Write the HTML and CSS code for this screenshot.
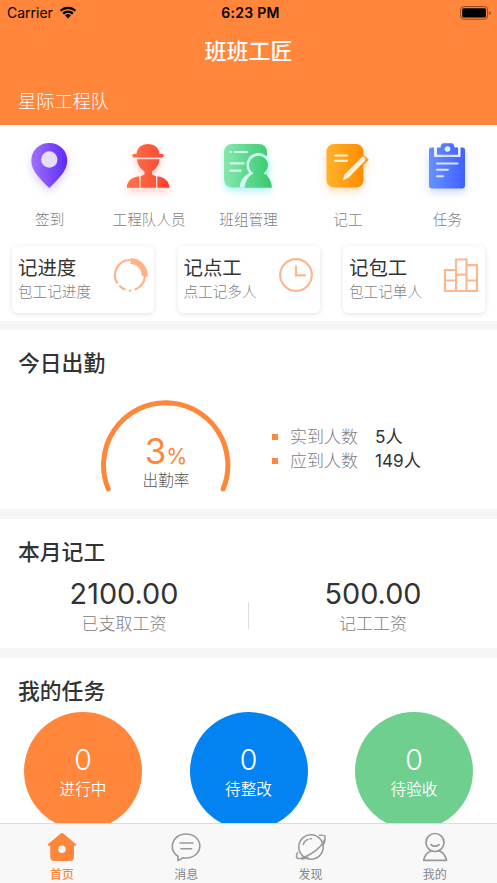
FILE: index.html
```html
<!DOCTYPE html>
<html lang="zh-CN">
<head>
<meta charset="utf-8">
<title>班班工匠</title>
<link rel="stylesheet" href="styles.css">
</head>
<body>
<div class="app">
  <header class="header">
    <div class="status">
      <div class="carrier">Carrier
        <svg width="18" height="13" viewBox="0 0 18 13"><path d="M1.6 4.8a10.6 10.6 0 0 1 14.8 0M4.2 7.6a6.8 6.8 0 0 1 9.6 0" fill="none" stroke="#000" stroke-width="2.3"/><path d="M9 12.4L6.1 9.5a4.1 4.1 0 0 1 5.8 0z"/></svg>
      </div>
      <div class="clock">6:23 PM</div>
      <div class="battery">
        <svg width="32" height="14" viewBox="0 0 32 14"><rect x=".6" y=".6" width="27" height="12.6" rx="3.2" fill="none" stroke="#8c4a20"/><rect x="2.2" y="2.3" width="23.8" height="9.2" rx="1.5"/><path d="M29.3 5v4q1.6-.5 1.6-2t-1.6-2z" fill="#8c4a20"/></svg>
      </div>
    </div>
    <h1 class="title">班班工匠</h1>
    <div class="team">星际工程队</div>
  </header>

  <section class="top">
    <nav class="shortcuts">
      <a class="shortcut">
        <svg class="glow-violet" width="60" height="66" viewBox="0 0 60 66"><defs><linearGradient id="violet"><stop offset="0" stop-color="#a071fa"/><stop offset="1" stop-color="#5c2bfa"/></linearGradient></defs><path fill="url(#violet)" d="M29.300 8c10 0 18 7.500 18 17.500C47.300 36 38.300 44 29.300 53C20.300 44 11.300 36 11.300 25.500C11.300 15.500 19.300 8 29.300 8z"/><circle cx="29.300" cy="24.500" r="8.200" fill="#e5ddfc"/></svg>
        <span>签到</span>
      </a>
      <a class="shortcut">
        <svg class="glow-red" width="60" height="66" viewBox="0 0 60 66"><defs><linearGradient id="red" gradientUnits="userSpaceOnUse" x1="9" y1="0" x2="51" y2="0"><stop offset="0" stop-color="#ff7648"/><stop offset="1" stop-color="#fd4132"/></linearGradient></defs><g fill="url(#red)" transform="translate(-1 0)"><path d="M16.500 19h2C19 12.500 24 9 30 9s11 3.500 11.500 10h2.500a1.700 1.700 0 0 1 0 3.500h-28a1.700 1.700 0 0 1 0-3.500z"/><path d="M19 24.200h22.500q-.5 8-7.500 12.300v3l4 1.800v11.500H22.600V41.300l3.900-1.800v-3Q19.500 32 19 24.200z"/><path d="M21.300 41.200v11.600H8.800c0-6.500 5-11 12.500-11.600zM39.300 41.200c7 .8 12.200 5.300 12.200 11.600H39.300z"/></g></svg>
        <span>工程队人员</span>
      </a>
      <a class="shortcut">
        <svg class="glow-cyan" width="60" height="66" viewBox="0 0 60 66"><defs><linearGradient id="green" gradientUnits="userSpaceOnUse" x1="6" y1="0" x2="54" y2="0"><stop offset="0" stop-color="#84e8ad"/><stop offset="1" stop-color="#37c96f"/></linearGradient><clipPath id="sheet"><rect x="6" y="9" width="43" height="43.500" rx="8"/></clipPath></defs><rect x="6" y="9" width="43" height="43.500" rx="8" fill="url(#green)"/><path d="M12.500 17h.5m4 0h12M12.500 28.300h13M12.500 35.700h10" stroke="#d5fff0" stroke-width="2.200" stroke-linecap="round"/><g fill="#d3faf3"><circle cx="40.500" cy="30" r="12"/><path d="M21.500 52.500q1-10 11-15.500H48l1 15.500z"/></g><g fill="url(#green)"><circle cx="40.500" cy="30.300" r="9.500"/><path d="M26.500 52.800q1-10.300 8.700-14.300 1.300-.8.600-2.500h9.400q-.7 1.700.6 2.500 7.400 4 8.200 14.300z"/></g></svg>
        <span>班组管理</span>
      </a>
      <a class="shortcut">
        <svg class="glow-orange" width="60" height="66" viewBox="0 0 60 66"><defs><linearGradient id="amber"><stop offset="0" stop-color="#ffb22b"/><stop offset="1" stop-color="#ff8c00"/></linearGradient></defs><rect x="8.500" y="9" width="37" height="43.500" rx="7.500" fill="url(#amber)"/><path d="M17 20.500h12M17 25.800h12" stroke="#fff3dc" stroke-width="2.200" stroke-linecap="round"/><path d="M45 19.500l5.800 5.200-4.300 4.800-6-5z" fill="#ff9920"/><path d="M43.500 22.500q1.700-1.400 3.200.2t.1 3.300L30.500 42.800l-5.500 2.400 1.500-5.800z" fill="#fff1d9"/></svg>
        <span>记工</span>
      </a>
      <a class="shortcut">
        <svg class="glow-blue" width="60" height="66" viewBox="0 0 60 66"><defs><linearGradient id="blue" gradientUnits="userSpaceOnUse" x1="12" y1="0" x2="48" y2="0"><stop offset="0" stop-color="#6692ff"/><stop offset="1" stop-color="#3f60ff"/></linearGradient></defs><g fill="url(#blue)"><path d="M12 15q0-2.500 2.500-2.500h2.500V22h26.500v-9.500h2q2.500 0 2.500 2.500v35.500q0 3-3 3H15q-3 0-3-3z"/><path d="M20 12.500h3.500q.5-4.300 3-4.300h8q2.500 0 3 4.300H41v7.300H20z"/></g><circle cx="30.500" cy="14" r="2.800" fill="#e8edff"/><path d="M20 28.500h20.500M20 34.800h11M20 41.200h6" stroke="#dce5ff" stroke-width="2" stroke-linecap="round"/></svg>
        <span>任务</span>
      </a>
    </nav>
    <div class="cards">
      <div class="card">
        <div><h3>记进度</h3><p>包工记进度</p></div>
        <svg width="36" height="36" viewBox="0 0 36 36"><g fill="none" stroke="#ffb284"><path d="M18.500 3A15.200 15.200 0 0 0 5.500 26.500" stroke-width="2.200"/><path d="M7.300 28.800a15.200 15.200 0 0 0 6.300 4M17 33.600h2.200M22.700 32.700A15.200 15.200 0 0 0 33 19" stroke-width="2.200"/><path d="M18.500 4a14.500 14.500 0 0 1 14.300 15.500" stroke-width="6"/></g></svg>
      </div>
      <div class="card">
        <div><h3>记点工</h3><p>点工记多人</p></div>
        <svg width="36" height="36" viewBox="0 0 36 36"><g fill="none" stroke="#f9b890" stroke-width="2.200"><circle cx="18" cy="18" r="15.800"/><path d="M18 8.500V18.300h9.800"/></g></svg>
      </div>
      <div class="card">
        <div><h3>记包工</h3><p>包工记单人</p></div>
        <svg width="36" height="36" viewBox="0 0 36 36"><path fill="none" stroke="#f9b890" stroke-width="2.200" d="M2 13h11v21H2zM13 2.500h10.500V34H13zM23.500 8.200H34V34H23.500zM2 23.500h11m0-5.800h10.500m0 5.800H34"/></svg>
      </div>
    </div>
  </section>

  <section class="attendance">
    <h2>今日出勤</h2>
    <div class="attendance-body">
      <div class="gauge">
        <svg width="130" height="94" viewBox="0 0 130 94"><path d="M7.300 90A62.200 62.200 0 1 1 122.100 90" fill="none" stroke="#fe873c" stroke-width="5" stroke-linecap="round"/></svg>
        <div class="gauge-label"><div class="rate">3<small>%</small></div><div class="rate-name">出勤率</div></div>
      </div>
      <dl class="counts">
        <dt>实到人数</dt><dd>5人</dd>
        <dt>应到人数</dt><dd>149人</dd>
      </dl>
    </div>
  </section>

  <section class="month">
    <h2>本月记工</h2>
    <div class="wages">
      <div class="wage"><b>2100.00</b><span>已支取工资</span></div>
      <i class="divider"></i>
      <div class="wage"><b>500.00</b><span>记工工资</span></div>
    </div>
  </section>

  <section class="tasks">
    <h2>我的任务</h2>
    <div class="circles">
      <div class="circle doing"><b>0</b><span>进行中</span></div>
      <div class="circle fixing"><b>0</b><span>待整改</span></div>
      <div class="circle checking"><b>0</b><span>待验收</span></div>
    </div>
  </section>

  <nav class="tabbar">
    <a class="tab active">
      <svg width="32" height="32" viewBox="0 0 32 32"><path fill="#fd863b" fill-rule="evenodd" d="M15 2.300q1-.8 2 0l13 11q1 1.200-.5 1.400H28v10.800q0 4.500-4.500 4.500h-15Q4.200 30 4.200 25.500V14.700H2.500q-1.500-.2-.5-1.400zM16 14.500a3.700 3.700 0 1 0 0 7.400a3.700 3.700 0 1 0 0-7.400z"/></svg>
      <span>首页</span>
    </a>
    <a class="tab">
      <svg width="32" height="32" viewBox="0 0 32 32"><g fill="none" stroke="#989898" stroke-width="1.600" stroke-linecap="round" stroke-linejoin="round"><path d="M8 25.200C4.500 23 2.300 19.500 2.300 15.500 2.300 8.300 8 3 16 3s13.800 5.300 13.800 12S24 27 16 27q-1.500 0-3-.3L8 29.600z"/><path d="M10 12h13M11 17.700h10.500"/></g></svg>
      <span>消息</span>
    </a>
    <a class="tab">
      <svg width="32" height="32" viewBox="0 0 32 32"><g fill="none" stroke="#989898" stroke-width="1.500" stroke-linecap="round"><circle cx="16" cy="16" r="12.200"/><path d="M8.300 13.500Q9.500 9.500 13 8.500M15.200 7.700h1.300"/><path d="M24.500 4.400q4.800-.8 5.500.8c.8 2.800-2.500 9-9 14.200S4.500 29 2.300 27.200C1 26 1.500 23.500 2.500 21.500M28.300 14q1.900-3.500 1.700-7M6.500 28q3.500-.2 6.500-1.500"/></g></svg>
      <span>发现</span>
    </a>
    <a class="tab">
      <svg width="32" height="32" viewBox="0 0 32 32"><g fill="none" stroke="#989898" stroke-width="1.700" stroke-linecap="round" stroke-linejoin="round"><circle cx="16" cy="11.500" r="9"/><path d="M12 13.700q4 3 8 0M11.500 20Q6 22.500 4.700 29.300h22.800Q26 22.500 20.500 20"/></g></svg>
      <span>我的</span>
    </a>
  </nav>
</div>
</body>
</html>
```
FILE: styles.css
```css
* { box-sizing: border-box; margin: 0; padding: 0; }
body {
  width: 497px;
  height: 883px;
  overflow: hidden;
  background: #f5f5f5;
  color: #333;
  font-family: Inter, "Noto Sans CJK SC", sans-serif;
}
svg { display: block; flex: none; }
.app { height: 883px; display: flex; flex-direction: column; overflow: hidden; }

.header { flex: none; height: 125px; background: #ff863b; color: #fff; }
.status {
  display: grid;
  grid-template-columns: 1fr auto 1fr;
  align-items: center;
  height: 25px;
  padding: 0 5px 0 7px;
  color: #000;
  font-size: 14px;
}
.carrier { display: flex; align-items: center; gap: 6px; }
.clock { font-weight: 600; letter-spacing: .3px; margin-left: 2px; }
.battery { justify-self: end; }
.title { height: 50px; line-height: 52px; text-align: center; font-size: 22px; font-weight: 500; }
.team { padding: 11px 18px 0; line-height: 31px; font-size: 18.2px; font-weight: 300; }

.top { flex: none; height: 196px; background: #fff; margin-bottom: 9px; padding-top: 10px; }
.shortcuts { display: grid; grid-template-columns: repeat(5, 1fr); }
.shortcut { display: flex; flex-direction: column; align-items: center; font-size: 14.6px; color: #808080; font-weight: 300; }
.shortcut span { line-height: 22px; margin: 8px 0 0; }
.glow-violet { filter: drop-shadow(0 4px 4px #7d4dfa45); }
.glow-red { filter: drop-shadow(0 4px 4px #ff503845); }
.glow-cyan { filter: drop-shadow(0 4px 3px #44e3ee60); }
.glow-orange { filter: drop-shadow(0 4px 4px #ff941b50); }
.glow-blue { filter: drop-shadow(0 4px 4px #4a6fff45); }

.cards { display: flex; justify-content: space-between; padding: 0 12px; margin-top: 15px; }
.card {
  width: 142px;
  height: 67px;
  padding: 8px 6px 0;
  display: flex;
  justify-content: space-between;
  border-radius: 5px;
  background: #fff;
  box-shadow: 0 1px 5px rgba(0, 0, 0, .12);
}
.card h3 { font-size: 19.4px; line-height: 28px; font-weight: 400; }
.card p { font-size: 14.6px; line-height: 20px; font-weight: 300; color: #808080; white-space: nowrap; }
.card svg { margin-top: 3px; }

h2 { font-size: 21.8px; line-height: 31px; font-weight: 500; padding-left: 18px; }
.attendance { flex: none; height: 179px; margin-bottom: 10px; padding-top: 18px; background: #fff; }
.attendance-body { display: flex; padding-left: 101px; margin-top: 20px; }
.gauge { display: grid; width: 130px; }
.gauge > * { grid-area: 1 / 1; }
.gauge-label { padding-top: 34px; text-align: center; }
.rate { height: 37px; font-size: 35px; line-height: 37px; color: #fe873c; white-space: nowrap; }
.rate small { font-size: 21.5px; font-weight: 400; }
.rate-name { font-size: 15.6px; line-height: 22px; font-weight: 300; color: #555; }
.counts { display: grid; grid-template-columns: 86px auto; align-content: start; line-height: 24px; margin: 26px 0 0 41px; font-size: 17.2px; }
.counts dt { display: flex; align-items: center; gap: 12px; font-size: 17px; color: #808080; font-weight: 300; white-space: nowrap; }
.counts dt::before { content: ""; flex: none; width: 6px; height: 6px; background: #fe873c; }
.counts dd { margin-left: 17px; }

.month { flex: none; height: 129px; margin-bottom: 10px; padding-top: 18px; background: #fff; }
.wages { display: flex; align-items: flex-start; margin-top: 8px; }
.wage { flex: 1; display: flex; flex-direction: column; align-items: center; }
.wage b { font-size: 28.8px; line-height: 36px; font-weight: 400; }
.wage span { font-size: 17px; line-height: 24px; font-weight: 300; color: #808080; }
.divider { width: 1px; height: 27px; margin-top: 26px; background: #ddd; }

.tasks { flex: none; height: 166px; padding-top: 18px; background: #fff; overflow: hidden; }
.circles { display: flex; justify-content: space-between; padding: 0 24px; margin-top: 5px; }
.circle {
  width: 118px;
  height: 118px;
  padding-top: 31px;
  border-radius: 50%;
  color: #fff;
  display: flex;
  flex-direction: column;
  align-items: center;
}
.circle b { font-size: 28.5px; line-height: 33px; font-weight: 300; }
.circle span { font-size: 15.6px; line-height: 27px; font-weight: 350; }
.doing { background: #ff863b; }
.fixing { background: #0283f1; }
.checking { background: #6fcf8f; }

.tabbar { flex: none; height: 60px; margin-top: -1px; display: flex; background: #f8f8f8; border-top: 1px solid #dcdcdc; }
.tab { flex: 1; display: flex; flex-direction: column; align-items: center; padding-top: 7px; font-size: 12px; color: #858585; }
.tab span { line-height: 18px; margin-top: 3px; }
.tab.active { color: #fd863b; font-weight: 500; }
```
